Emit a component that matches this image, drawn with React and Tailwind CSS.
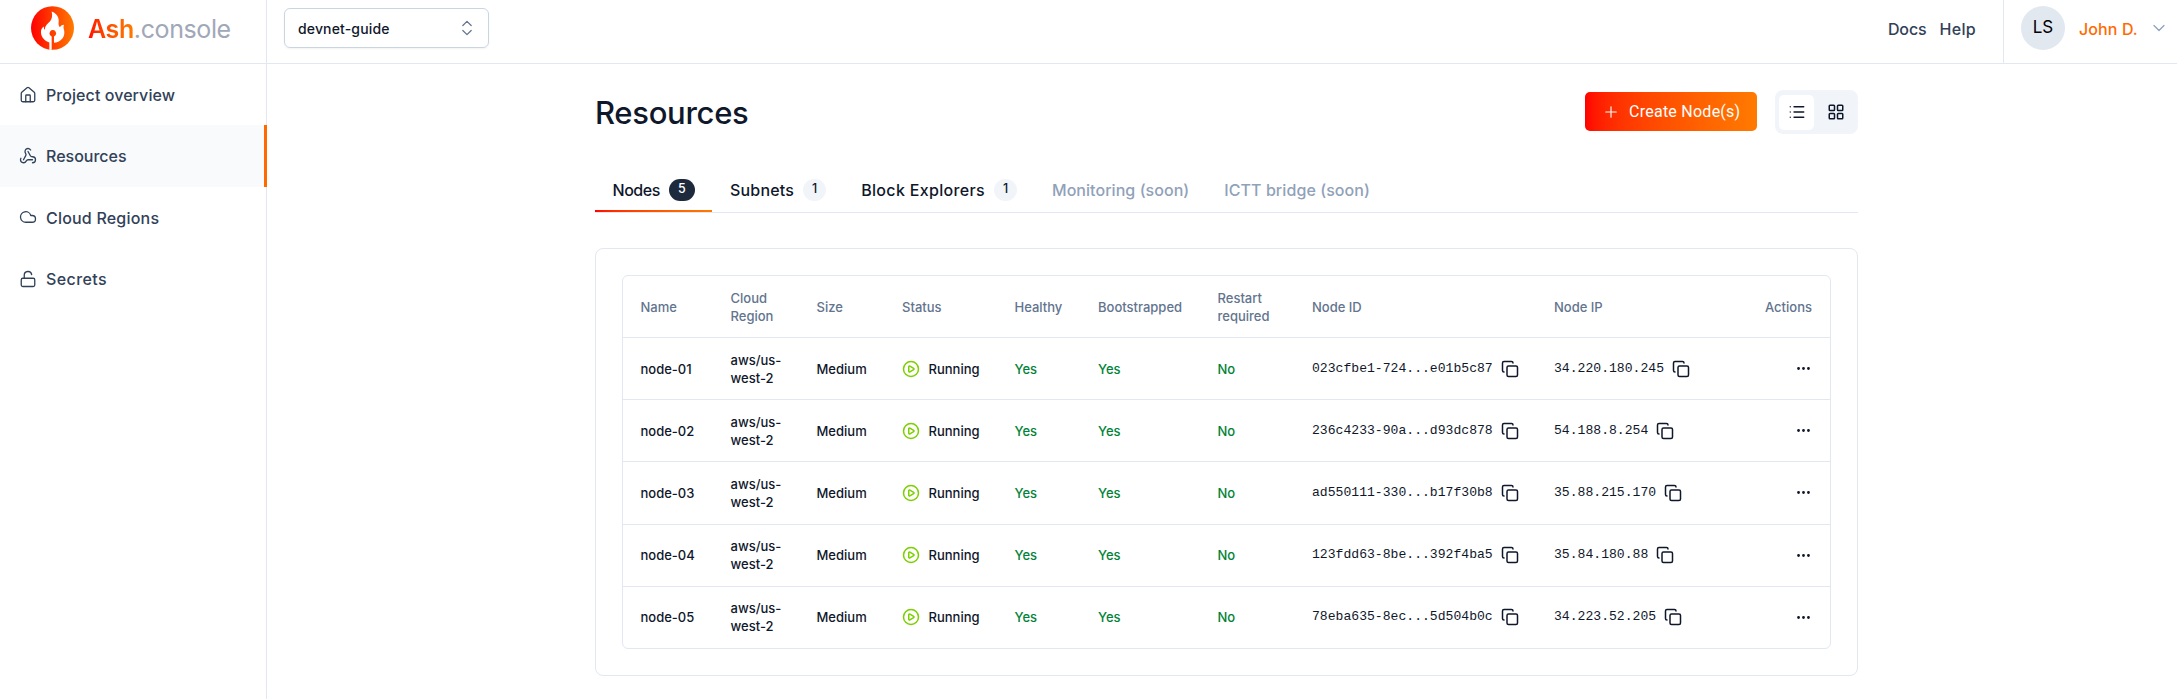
import React from "react";
import { House, Webhook, Cloud, LockOpen, ChevronsUpDown, ChevronDown, Plus, List, LayoutGrid, CirclePlay, Copy, Ellipsis } from "lucide-react";

const navItems = [
  { label: "Project overview", Icon: House, tracking: "tracking-[0.07px]" },
  { label: "Resources", Icon: Webhook, active: true, tracking: "tracking-normal" },
  { label: "Cloud Regions", Icon: Cloud, tracking: "tracking-[0.2px]" },
  { label: "Secrets", Icon: LockOpen, tracking: "tracking-[0.4px]" },
];

const nodes = [
  { name: "node-01", id: "023cfbe1-724...e01b5c87", ip: "34.220.180.245" },
  { name: "node-02", id: "236c4233-90a...d93dc878", ip: "54.188.8.254" },
  { name: "node-03", id: "ad550111-330...b17f30b8", ip: "35.88.215.170" },
  { name: "node-04", id: "123fdd63-8be...392f4ba5", ip: "35.84.180.88" },
  { name: "node-05", id: "78eba635-8ec...5d504b0c", ip: "34.223.52.205" },
];

const rowGrid =
  "grid grid-cols-[90px_86px_85.5px_112.5px_83.5px_119.5px_94.5px_242px_1fr_auto] items-center pl-[17.5px] pr-[18px]";

function Logo() {
  return (
    <svg width="43" height="44" viewBox="0 0 129 131" className="shrink-0">
      <defs>
        <linearGradient id="ash" x1="0" x2="1" y1="0" y2="0">
          <stop offset="0" stopColor="#ff0000" />
          <stop offset="1" stopColor="#ff7a00" />
        </linearGradient>
      </defs>
      <ellipse cx="64.5" cy="65.5" rx="64.5" ry="65.5" fill="url(#ash)" />
      <path
        d="M62 16C77 22 85 34 83 47C82 54 83 60 87 63C90 58 94 56 99 56C95 66 101 71 100 81C99 96 88 107 69 110V91A10 10 0 1 0 62 91V131H55V109C41 105 31 94 30 80C29 71 33 64 39 61C38 66 39 69 42 71C41 60 49 54 56 47C63 39 65 29 62 16Z"
        fill="#fff"
      />
    </svg>
  );
}

function Header() {
  return (
    <header className="flex h-[64px] shrink-0 border-b border-slate-200">
      <div className="flex w-[267px] shrink-0 items-start border-r border-slate-200 pl-[31px] pt-[6px]">
        <Logo />
        <div className="ml-[14px] mt-[5px] text-[25px] leading-[36px] tracking-[-0.4px] whitespace-nowrap">
          <span className="bg-gradient-to-r from-[#ff0000] to-[#ff7a00] bg-clip-text font-semibold text-transparent">Ash</span>
          <span className="text-[#a0a8b8]">.console</span>
        </div>
      </div>
      <div className="flex flex-1 items-start pl-[17px] pt-2">
        <button className="flex h-10 w-[205px] items-center justify-between rounded-md border border-slate-300 pr-[11px] pl-[13px] shadow-xs">
          <span className="text-[14px] font-medium tracking-[0.15px] text-slate-900">devnet-guide</span>
          <ChevronsUpDown className="size-[20px] text-slate-500" strokeWidth={1.5} />
        </button>
      </div>
      <nav className="flex gap-[13px] pr-[27px] pt-[17px] text-[16px] leading-6 font-medium tracking-[-0.1px] text-slate-700">
        <a>Docs</a>
        <a className="tracking-[0.3px]">Help</a>
      </nav>
      <div className="flex w-[174px] shrink-0 border-l border-slate-200 pl-[17px] pt-[6px]">
        <div className="flex size-[44px] shrink-0 items-center justify-center rounded-full bg-slate-200 text-[17px] text-black">LS</div>
        <span className="ml-[14px] mt-[11px] w-[60px] text-[16px] leading-6 font-medium tracking-[0.1px] whitespace-nowrap text-orange-500">John D.</span>
        <ChevronDown className="mt-[12px] ml-[10px] size-[20px] text-slate-400" strokeWidth={1.5} />
      </div>
    </header>
  );
}

function Sidebar() {
  return (
    <aside className="w-[267px] shrink-0 border-r border-slate-200">
      {navItems.map(({ label, Icon, active, tracking }) => (
        <div
          key={label}
          className={
            active
              ? "-mr-px flex h-[61.3px] items-center gap-[8px] border-r-3 border-orange-500 bg-slate-50 pl-[19px] text-slate-700"
              : "flex h-[61.3px] items-center gap-[8px] pl-[19px] text-slate-700"
          }
        >
          <Icon className="size-[18px]" strokeWidth={1.75} />
          <span className={`ml-px pt-px text-[16px] font-medium ${tracking}`}>{label}</span>
        </div>
      ))}
    </aside>
  );
}

function Tab({ label, count, active, muted, tracking }) {
  return (
    <div className="flex h-full flex-col">
      <div className={muted ? "flex h-[41px] items-center px-[17.5px] text-slate-400" : "flex h-[41px] items-center gap-[9px] px-[17.5px] text-slate-900"}>
        <span className={`pt-px ${tracking}`}>{label}</span>
        {count && (
          <span className={active ? "flex h-[22px] w-[26px] items-center justify-center rounded-full bg-slate-800 text-[12.5px] text-white" : "flex h-[22px] w-[23px] items-center justify-center rounded-full bg-slate-100 text-[12.5px] text-slate-900"}>
            {count}
          </span>
        )}
      </div>
      {active && <div className="h-[2px] bg-gradient-to-r from-[#ff0000] to-[#ff7a00]" />}
    </div>
  );
}

function NodeTable() {
  return (
    <div className="mt-[35px] rounded-lg border border-slate-200 p-[26px]">
      <div className="rounded-md border border-slate-200 text-[13px] leading-[18px] font-medium text-slate-900">
        <div className={`${rowGrid} h-[61px] text-slate-500`}>
          <span>Name</span>
          <span>Cloud<br />Region</span>
          <span>Size</span>
          <span>Status</span>
          <span>Healthy</span>
          <span>Bootstrapped</span>
          <span>Restart<br />required</span>
          <span>Node ID</span>
          <span>Node IP</span>
          <span>Actions</span>
        </div>
        {nodes.map((n) => (
          <div key={n.name} className={`${rowGrid} h-[62.2px] border-t border-slate-200`}>
            <span>{n.name}</span>
            <span>aws/us-<br />west-2</span>
            <span>Medium</span>
            <span className="flex items-center gap-[8.5px]">
              <CirclePlay className="size-[18px] text-lime-500" />
              Running
            </span>
            <span className="text-green-700">Yes</span>
            <span className="text-green-700">Yes</span>
            <span className="text-green-700">No</span>
            <span className="flex items-center gap-[8px] font-['Liberation_Mono',monospace] text-[13.1px] font-normal">
              {n.id}
              <Copy className="size-[18px]" />
            </span>
            <span className="flex items-center gap-[8px] font-['Liberation_Mono',monospace] text-[13.1px] font-normal">
              {n.ip}
              <Copy className="size-[18px]" />
            </span>
            <Ellipsis className="size-[17px] fill-current" />
          </div>
        ))}
      </div>
    </div>
  );
}

export default function App() {
  return (
    <div className="flex h-[699px] w-[2177px] flex-col overflow-hidden bg-white font-['Inter',sans-serif]">
      <Header />
      <div className="flex min-h-0 flex-1">
        <Sidebar />
        <main className="ml-[328px] w-[1263px]">
          <div className="flex h-[70px] items-start pt-[26px]">
            <h1 className="mt-[5px] flex-1 text-[31px] leading-[36px] font-medium tracking-[-0.3px] text-slate-900">Resources</h1>
            <button className="mt-[2px] flex h-[39px] w-[172px] items-center gap-[9px] rounded-[5px] bg-gradient-to-r from-[#ff0000] to-[#ff7a00] pl-[17px] font-['Roboto','Inter',sans-serif] text-[16px] tracking-[0.25px] whitespace-nowrap text-white">
              <Plus className="size-[18px]" strokeWidth={1.5} />
              Create Node(s)
            </button>
            <div className="ml-[18px] flex h-[44px] w-[83px] items-center gap-1 rounded-lg bg-slate-100 p-1 text-slate-900">
              <div className="flex h-[35px] w-[35px] items-center justify-center rounded-[5px] bg-white">
                <List className="size-[18px]" strokeWidth={1.75} />
              </div>
              <div className="flex h-[35px] w-[35px] items-center justify-center">
                <LayoutGrid className="size-[18px]" />
              </div>
            </div>
          </div>
          <div className="mt-[35px] flex h-[44px] border-b border-slate-200 text-[16px] font-medium whitespace-nowrap">
            <Tab label="Nodes" count="5" active tracking="tracking-[-0.45px]" />
            <Tab label="Subnets" count="1" tracking="tracking-[0.2px]" />
            <Tab label="Block Explorers" count="1" tracking="tracking-[0.33px]" />
            <Tab label="Monitoring (soon)" muted tracking="tracking-[0.05px]" />
            <Tab label="ICTT bridge (soon)" muted tracking="tracking-[0.07px]" />
          </div>
          <NodeTable />
        </main>
      </div>
    </div>
  );
}
